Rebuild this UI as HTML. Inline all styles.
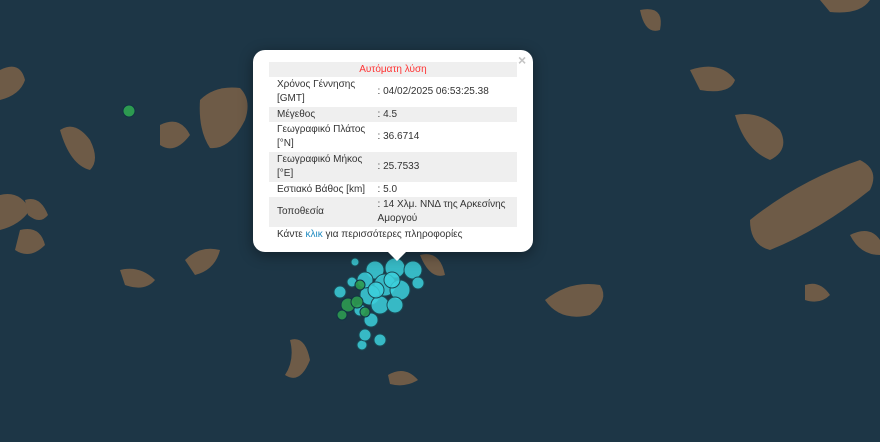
<!DOCTYPE html>
<html><head><meta charset="utf-8"><style>
body{margin:0;width:880px;height:442px;overflow:hidden;background:#1d3646;font-family:"Liberation Sans",sans-serif}
svg{position:absolute;left:0;top:0}
.pop{position:absolute;left:253px;top:50px;width:280px;height:202px;background:#fff;border-radius:12px;box-shadow:0 3px 14px rgba(0,0,0,.4)}
.tip{position:absolute;left:387px;top:251px;width:0;height:0;border-left:10px solid transparent;border-right:10px solid transparent;border-top:10px solid #fff}
.x{position:absolute;left:518px;top:52px;color:#c3c3c3;font-size:14px;font-weight:bold}
table{position:absolute;left:16px;top:12px;width:248px;border-collapse:collapse;font-size:10px;color:#333}
td{padding:1px 8px;line-height:14px;vertical-align:middle}
tr.s td{padding-top:0;padding-bottom:0;height:15px}
tr.g td{background:#efefef}
td.v{padding-left:2px!important}
.h{text-align:center;color:#f33}
</style></head><body>
<svg width="880" height="442">
<g fill="#6e5b47">
<path d="M200 100 Q215 85 240 88 Q252 100 245 120 Q230 150 210 148 Q198 130 200 100Z"/>
<path d="M60 130 Q75 120 90 140 Q100 160 90 170 Q70 165 60 130Z"/>
<path d="M0 70 Q20 60 25 80 Q20 95 0 100Z"/>
<path d="M690 70 Q720 60 735 80 Q730 95 700 90Z"/>
<path d="M735 115 Q760 110 780 130 Q790 150 770 160 Q745 150 735 115Z"/>
<path d="M750 220 Q800 180 860 160 Q880 170 870 190 Q820 230 770 250 Q750 245 750 220Z"/>
<path d="M545 300 Q570 280 600 285 Q610 300 590 315 Q560 322 545 300Z"/>
<path d="M805 285 Q820 280 830 295 Q820 305 805 300Z"/>
<path d="M185 260 Q200 245 220 250 Q215 270 195 275Z"/>
<path d="M120 270 Q140 265 155 280 Q145 292 125 285Z"/>
<path d="M0 195 Q20 190 30 210 Q20 225 0 230Z"/>
<path d="M20 230 Q40 225 45 245 Q30 260 15 250Z"/>
<path d="M25 200 Q40 195 48 215 Q40 225 28 215Z"/>
<path d="M290 340 Q305 335 310 360 Q300 385 285 375 Q295 360 290 340Z"/>
<path d="M388 375 Q405 365 418 380 Q405 388 390 384Z"/>
<path d="M160 125 Q180 115 190 135 Q175 155 160 145Z"/>
<path d="M640 10 Q665 5 660 30 Q645 35 640 10Z"/>
<path d="M820 0 L870 0 Q860 15 830 12Z"/>
<path d="M850 235 Q870 225 880 240 L880 255 Q860 255 850 235Z"/>
<path d="M420 255 Q440 250 445 275 Q430 280 420 255Z"/>
</g>
<circle cx="129" cy="111" r="6" fill="#2d9a50" stroke="#134" />
<g stroke="#1a4a55" stroke-width="1" fill="#3cd0dc" fill-opacity=".85">
<circle cx="375" cy="270" r="9"/><circle cx="395" cy="268" r="10"/><circle cx="413" cy="270" r="9"/>
<circle cx="385" cy="285" r="11"/><circle cx="400" cy="290" r="10"/><circle cx="370" cy="295" r="10"/>
<circle cx="365" cy="280" r="8"/><circle cx="355" cy="262" r="4"/><circle cx="340" cy="292" r="6"/>
<circle cx="418" cy="283" r="6"/><circle cx="380" cy="305" r="9"/><circle cx="395" cy="305" r="8"/>
<circle cx="371" cy="320" r="7"/><circle cx="360" cy="310" r="6"/><circle cx="380" cy="340" r="6"/>
<circle cx="362" cy="345" r="5"/><circle cx="365" cy="335" r="6"/><circle cx="352" cy="282" r="5"/>
<circle cx="392" cy="280" r="8"/><circle cx="376" cy="290" r="8"/>
</g>
<g stroke="#134" stroke-width="1" fill="#2d9a50" fill-opacity=".9">
<circle cx="360" cy="285" r="5"/><circle cx="348" cy="305" r="7"/><circle cx="357" cy="302" r="6"/>
<circle cx="342" cy="315" r="5"/><circle cx="365" cy="312" r="5"/>
</g>
</svg>
<div class="pop"><table>
<tr class="g s"><td colspan="2" class="h">Αυτόματη λύση</td></tr>
<tr><td>Χρόνος Γέννησης [GMT]</td><td class="v">: 04/02/2025 06:53:25.38</td></tr>
<tr class="g s"><td>Μέγεθος</td><td class="v">: 4.5</td></tr>
<tr><td>Γεωγραφικό Πλάτος [°N]</td><td class="v">: 36.6714</td></tr>
<tr class="g"><td>Γεωγραφικό Μήκος [°E]</td><td class="v">: 25.7533</td></tr>
<tr class="s"><td>Εστιακό Βάθος [km]</td><td class="v">: 5.0</td></tr>
<tr class="g"><td>Τοποθεσία</td><td class="v">: 14 Χλμ. ΝΝΔ της Αρκεσίνης Αμοργού</td></tr>
<tr class="s"><td colspan="2">Κάντε <span style="color:#1f8ac0">κλικ</span> για περισσότερες πληροφορίες</td></tr>
</table></div>
<div class="tip"></div><div class="x">×</div>
</body></html>
